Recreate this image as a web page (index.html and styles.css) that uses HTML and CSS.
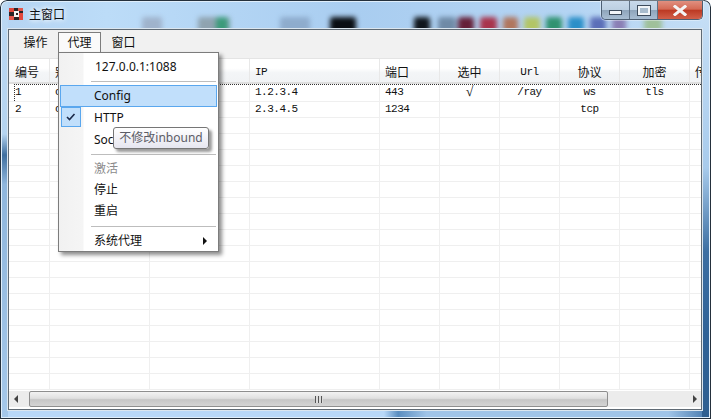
FILE: index.html
```html
<!DOCTYPE html>
<html lang="zh">
<head>
    <meta charset="UTF-8" />
    <meta name="viewport" content="width=device-width, initial-scale=1" />
    <title>主窗口</title>
    <link rel="stylesheet" href="styles.css">
</head>
<body>
<div class="window">
    <div class="blobs">
        <i class="blob b1"></i><i class="blob b2"></i><i class="blob b3"></i><i class="blob b4"></i>
        <i class="blob b5"></i><i class="blob b6"></i><i class="blob b7"></i><i class="blob b8"></i>
        <i class="blob b9"></i><i class="blob b10"></i><i class="blob b11"></i><i class="blob b12"></i>
        <i class="blob b13"></i><i class="blob b14"></i><i class="blob b15"></i><i class="blob b16"></i>
    </div>

    <div class="titlebar">
        <svg class="app-icon" width="14" height="12" viewBox="0 0 14 12">
            <rect width="14" height="12" fill="#2a2326"/>
            <rect x="0" y="0" width="5" height="4" fill="#e2473c"/>
            <rect x="9" y="0" width="5" height="3" fill="#e2574c"/>
            <rect x="0" y="8" width="5" height="4" fill="#e2574c"/>
            <rect x="10" y="5" width="4" height="7" fill="#e2473c"/>
            <rect x="5" y="3" width="5" height="6" fill="#f4f4f4"/>
            <rect x="7" y="5" width="2" height="2" fill="#2a2326"/>
        </svg>
        <span class="title">主窗口</span>
    </div>

    <div class="controls">
        <div class="ctl ctl-min"><i></i></div>
        <div class="ctl ctl-max"><i></i></div>
        <div class="ctl ctl-close">
            <svg width="14" height="11" viewBox="0 0 14 11"><path d="M2 1.5 L12 9.5 M12 1.5 L2 9.5" stroke="#f4f4f4" stroke-width="3" stroke-linecap="square"/></svg>
        </div>
    </div>

    <div class="client">
        <div class="menubar">
            <span class="menubar-item item-first">操作</span>
            <span class="menubar-item is-open">代理</span>
            <span class="menubar-item item-last">窗口</span>
        </div>

        <div class="list">
            <table class="grid">
                <colgroup>
                    <col class="c-a"><col class="c-b"><col class="c-b"><col class="c-ip"><col class="c-c"><col class="c-c"><col class="c-c"><col class="c-c"><col class="c-d"><col class="c-c">
                </colgroup>
                <thead>
                    <tr>
                        <th class="left">编号</th><th class="left">别名</th><th class="left"></th><th class="left latin">IP</th><th class="left">端口</th>
                        <th>选中</th><th class="latin">Url</th><th>协议</th><th>加密</th><th class="left">传输</th>
                    </tr>
                </thead>
                <tbody>
                    <tr class="is-focus"><td>1</td><td>c</td><td></td><td>1.2.3.4</td><td>443</td><td class="mid"><span class="tick">√</span></td><td class="mid">/ray</td><td class="mid">ws</td><td class="mid">tls</td><td></td></tr>
                    <tr><td>2</td><td>c</td><td></td><td>2.3.4.5</td><td>1234</td><td></td><td></td><td class="mid">tcp</td><td></td><td></td></tr>
                    <tr><td></td><td></td><td></td><td></td><td></td><td></td><td></td><td></td><td></td><td></td></tr>
                    <tr><td></td><td></td><td></td><td></td><td></td><td></td><td></td><td></td><td></td><td></td></tr>
                    <tr><td></td><td></td><td></td><td></td><td></td><td></td><td></td><td></td><td></td><td></td></tr>
                    <tr><td></td><td></td><td></td><td></td><td></td><td></td><td></td><td></td><td></td><td></td></tr>
                    <tr><td></td><td></td><td></td><td></td><td></td><td></td><td></td><td></td><td></td><td></td></tr>
                    <tr><td></td><td></td><td></td><td></td><td></td><td></td><td></td><td></td><td></td><td></td></tr>
                    <tr><td></td><td></td><td></td><td></td><td></td><td></td><td></td><td></td><td></td><td></td></tr>
                    <tr><td></td><td></td><td></td><td></td><td></td><td></td><td></td><td></td><td></td><td></td></tr>
                    <tr><td></td><td></td><td></td><td></td><td></td><td></td><td></td><td></td><td></td><td></td></tr>
                    <tr><td></td><td></td><td></td><td></td><td></td><td></td><td></td><td></td><td></td><td></td></tr>
                    <tr><td></td><td></td><td></td><td></td><td></td><td></td><td></td><td></td><td></td><td></td></tr>
                    <tr><td></td><td></td><td></td><td></td><td></td><td></td><td></td><td></td><td></td><td></td></tr>
                    <tr><td></td><td></td><td></td><td></td><td></td><td></td><td></td><td></td><td></td><td></td></tr>
                    <tr><td></td><td></td><td></td><td></td><td></td><td></td><td></td><td></td><td></td><td></td></tr>
                    <tr><td></td><td></td><td></td><td></td><td></td><td></td><td></td><td></td><td></td><td></td></tr>
                    <tr><td></td><td></td><td></td><td></td><td></td><td></td><td></td><td></td><td></td><td></td></tr>
                    <tr><td></td><td></td><td></td><td></td><td></td><td></td><td></td><td></td><td></td><td></td></tr>
                </tbody>
            </table>
        </div>

        <div class="hscroll">
            <div class="arrow arrow-left"></div>
            <div class="thumb"><span class="grip"></span></div>
            <div class="arrow arrow-right"></div>
        </div>
    </div>

    <div class="menu">
        <div class="menu-item menu-head">127.0.0.1:1088</div>
        <div class="sep sep-head"></div>
        <div class="menu-item is-hover">Config</div>
        <div class="menu-item is-checked">
            <span class="check"><svg width="10" height="8" viewBox="0 0 10 8"><path d="M1 4 L3.5 6.5 L8.5 1" fill="none" stroke="#1d2b4a" stroke-width="1.6"/></svg></span>
            HTTP
        </div>
        <div class="menu-item">Socks</div>
        <div class="sep"></div>
        <div class="menu-item is-short is-disabled">激活</div>
        <div class="menu-item is-short">停止</div>
        <div class="menu-item is-short">重启</div>
        <div class="sep sep-low"></div>
        <div class="menu-item is-short has-sub">系统代理<span class="sub-arrow"></span></div>
    </div>

    <div class="tooltip">不修改inbound</div>
</div>
</body>
</html>
```

FILE: styles.css
```css
html, body {
    margin: 0;
    padding: 0;
    overflow: hidden;
}
body {
    width: 711px;
    height: 419px;
    font-family: "Noto Sans", "Noto Sans CJK SC", sans-serif;
    font-size: 12px;
    color: #111;
}
.window {
    position: relative;
    width: 711px;
    height: 419px;
    box-sizing: border-box;
    padding: 0 9px 9px 8px;
    display: flex;
    flex-direction: column;
    overflow: hidden;
    border-radius: 7px 7px 0 0;
    background:
        linear-gradient(#bcd9f3 0, #b5d4f0 32%, #3f6f9f 37%, #8fb6dc 44%, #a5c8ea 100%) 2px 0 / 6px 100% no-repeat,
        linear-gradient(#c8e0f6 0, #a8cbec 40%, #3d6fa2 60%, #2f6297 80%, #2f5f90 100%) right 2px top 0 / 7px 100% no-repeat,
        linear-gradient(90deg, #b8d8f8 0, #b8d8f8 54%, #5b8ec0 56%, #a0c4e8 60%, #a0c4e8 94%, #3f73a8 100%) 0 100% / 100% 9px no-repeat,
        linear-gradient(90deg, #b5d4f2 0%, #bcdcf8 15%, #a9cdf0 50%, #b4d4f3 80%, #c4def6 100%);
    box-shadow: inset 0 0 0 1px #24303c, inset 0 0 0 2px #dfeefb;
}
.blobs {
    position: absolute;
    left: 0;
    right: 0;
    top: 14px;
    height: 15px;
    filter: blur(2.5px);
}
.blob {
    position: absolute;
    top: 3px;
    height: 18px;
    border-radius: 3px;
}
.b1 { left: 142px; width: 20px; background: #9fb3cc; }
.b2 { left: 198px; width: 32px; background: #8fa3b0; }
.b3 { left: 216px; width: 12px; background: #3b9b7a; }
.b4 { left: 280px; width: 30px; background: #8eaccd; }
.b5 { left: 330px; width: 26px; background: #0a0e14; }
.b6 { left: 414px; width: 16px; background: #10161c; }
.b7 { left: 438px; width: 18px; background: #6f8aa6; }
.b8 { left: 458px; width: 16px; background: #651f38; }
.b9 { left: 480px; width: 17px; background: #a8344c; }
.b10 { left: 503px; width: 15px; background: #b0765e; }
.b11 { left: 524px; width: 16px; background: #b2c566; }
.b12 { left: 546px; width: 16px; background: #2f9270; }
.b13 { left: 568px; width: 16px; background: #2b8fc8; }
.b14 { left: 590px; width: 16px; background: #5b6fb8; }
.b15 { left: 612px; width: 14px; background: #8a7fb5; }
.b16 { left: 644px; width: 18px; background: #9fc09a; }

.titlebar {
    position: relative;
    height: 29px;
    box-sizing: border-box;
    padding: 0 0 2px 1px;
    display: flex;
    align-items: center;
    gap: 6px;
    flex: none;
}
.title {
    font-size: 12px;
    color: #0c0f14;
    text-shadow: 0 0 6px #fff, 0 0 4px #fff;
}
.app-icon {
    flex: none;
}

.controls {
    position: absolute;
    top: 1px;
    right: 8px;
    width: 102px;
    height: 19px;
    box-sizing: border-box;
    display: flex;
    border: 1px solid #4d5f73;
    border-top: none;
    border-radius: 0 0 5px 5px;
    overflow: hidden;
    box-shadow: 0 0 0 1px rgba(255,255,255,.35);
}
.ctl {
    display: flex;
    align-items: center;
    justify-content: center;
    border-right: 1px solid #5f7286;
    box-sizing: border-box;
    background: linear-gradient(#c8d9ea 0%, #bccfe1 48%, #8fa5bb 52%, #a8bdd2 100%);
}
.ctl-min {
    width: 28px;
}
.ctl-min i {
    width: 11px;
    height: 3px;
    margin-top: 4px;
    background: #f2f5f8;
    border: 1px solid #3e4c5c;
}
.ctl-max {
    width: 28px;
}
.ctl-max i {
    width: 8px;
    height: 5px;
    border: 2px solid #f2f5f8;
    outline: 1px solid #3e4c5c;
    background: #a9bccd;
}
.ctl-close {
    flex: 1;
    border-right: none;
    background: linear-gradient(#e09080 0%, #d46a55 45%, #bc3a24 52%, #d2604a 100%);
}

.client {
    position: relative;
    flex: 1;
    min-height: 0;
    display: flex;
    flex-direction: column;
    background: #fff;
    border: 1px solid #5f6a74;
    box-shadow: 0 0 0 1px #dbe6ef;
    overflow: hidden;
}
.menubar {
    flex: none;
    height: 29px;
    box-sizing: border-box;
    padding-top: 2px;
    display: flex;
    align-items: flex-start;
    background: #f1f1f1;
    border-bottom: 1px solid #e4e4e4;
}
.menubar-item {
    box-sizing: border-box;
    height: 21px;
    line-height: 22px;
    text-align: center;
}
.item-first {
    width: 49px;
    padding-left: 4px;
}
.item-last {
    width: 45px;
}
.menubar-item.is-open {
    width: 43px;
    background: #fafafa;
    border: 1px solid #7d7d7d;
    border-bottom: none;
    line-height: 20px;
    position: relative;
    z-index: 3;
}
.list {
    flex: 1;
    min-height: 0;
    overflow: hidden;
}
.grid {
    border-collapse: separate;
    border-spacing: 0;
    table-layout: fixed;
    width: 701px;
}
.c-a { width: 41px; }
.c-b { width: 100px; }
.c-ip { width: 130px; }
.c-c { width: 60px; }
.c-d { width: 70px; }
.grid th {
    height: 21px;
    padding: 2px 0 0;
    font-size: 12px;
    font-weight: normal;
    text-align: center;
    background: linear-gradient(#fff 0%, #fff 40%, #f3f5f7 60%, #f1f3f5 100%);
    border-right: 1px solid #e8e8e8;
    border-bottom: 2px solid #dedede;
    overflow: hidden;
    white-space: nowrap;
}
.grid th.left {
    text-align: left;
    padding-left: 5px;
}
.grid th:first-child {
    padding-left: 6px;
}
.grid th.latin {
    font-family: "Liberation Mono", monospace;
    font-size: 11px;
    letter-spacing: -.5px;
}
.grid td {
    height: 15px;
    padding: 0 0 0 5px;
    font-family: "Liberation Mono", "Noto Sans CJK SC", monospace;
    font-size: 11px;
    letter-spacing: -.5px;
    line-height: 15px;
    border-right: 1px solid #efefef;
    border-bottom: 1px solid #efefef;
    overflow: hidden;
    white-space: nowrap;
}
.grid td:first-child {
    padding-left: 6px;
}
.grid td.mid {
    text-align: center;
    padding: 0;
}
.tick {
    font-family: "Liberation Serif", serif;
    font-size: 14px;
    letter-spacing: 0;
}
.is-focus td {
    background: repeating-linear-gradient(90deg, #333 0, #333 1px, transparent 1px, transparent 2px) 0 0 / 100% 1px no-repeat;
}
.is-focus td:first-child {
    background:
        repeating-linear-gradient(90deg, #333 0, #333 1px, transparent 1px, transparent 2px) 5px 0 / 100% 1px no-repeat,
        repeating-linear-gradient(#333 0, #333 1px, transparent 1px, transparent 2px) 5px 0 / 1px 100% no-repeat;
}

.hscroll {
    flex: none;
    height: 16px;
    margin-bottom: 2px;
    display: flex;
    background: #ececec;
}
.arrow {
    width: 20px;
    flex: none;
    position: relative;
}
.arrow::after {
    content: "";
    position: absolute;
    top: 4px;
    border: 4px solid transparent;
}
.arrow-left::after {
    left: 5px;
    border-right-color: #444;
    border-left-width: 0;
}
.arrow-right {
    margin-left: auto;
    width: 94px;
}
.arrow-right::after {
    right: 5px;
    border-left-color: #444;
    border-right-width: 0;
}
.thumb {
    width: 579px;
    flex: none;
    box-sizing: border-box;
    display: flex;
    align-items: center;
    justify-content: center;
    border: 1px solid #8e8e8e;
    border-radius: 2px;
    background: linear-gradient(#f2f2f2 0%, #e0e0e0 45%, #c6c6c6 55%, #d4d4d4 100%);
}
.grip {
    width: 8px;
    height: 7px;
    background: repeating-linear-gradient(90deg, #555 0, #555 1px, #ddd 1px, #ddd 3px);
}

.menu {
    position: absolute;
    left: 58px;
    top: 52px;
    width: 161px;
    height: 200px;
    box-sizing: border-box;
    background: linear-gradient(90deg, #f1f1f1 0, #f5f5f5 24px, #fff 25px);
    border: 1px solid #7c7c7c;
    box-shadow: 3px 3px 4px rgba(0,0,0,.45);
    padding: 3px 1px 2px;
    z-index: 4;
}
.menu-item {
    position: relative;
    height: 22px;
    line-height: 22px;
    padding-left: 34px;
    box-sizing: border-box;
    font-size: 12px;
}
.menu-item.is-short {
    height: 21px;
    line-height: 21px;
}
.menu-head {
    height: 21px;
    background: #fff;
    margin-left: 25px;
    padding-left: 10px;
}
.is-hover {
    background: #c1dffb;
    outline: 1px solid #5aa7ee;
    outline-offset: -1px;
}
.is-disabled {
    color: #8b8b8b;
}
.sep {
    height: 1px;
    margin: 3px 1px 3px 31px;
    background: #bdbdbd;
}
.sep-head {
    margin-top: 4px;
    margin-bottom: 3px;
}
.sep-low {
    margin-top: 5px;
}
.check {
    position: absolute;
    left: 1px;
    top: 0;
    width: 20px;
    height: 20px;
    box-sizing: border-box;
    display: flex;
    align-items: center;
    justify-content: center;
    background: #c1dffb;
    border: 1px solid #5aa7ee;
}
.has-sub .sub-arrow {
    position: absolute;
    right: 10px;
    top: 7px;
    border: 4px solid transparent;
    border-left-color: #111;
    border-right-width: 0;
}

.tooltip {
    position: absolute;
    left: 113px;
    top: 127px;
    width: 96px;
    height: 22px;
    box-sizing: border-box;
    line-height: 19px;
    text-align: center;
    font-size: 12px;
    color: #5c5c66;
    background: linear-gradient(#fff, #e6e6f0);
    border: 1px solid #767676;
    border-radius: 3px;
    box-shadow: 3px 3px 3px rgba(0,0,0,.4);
    z-index: 5;
}
```
